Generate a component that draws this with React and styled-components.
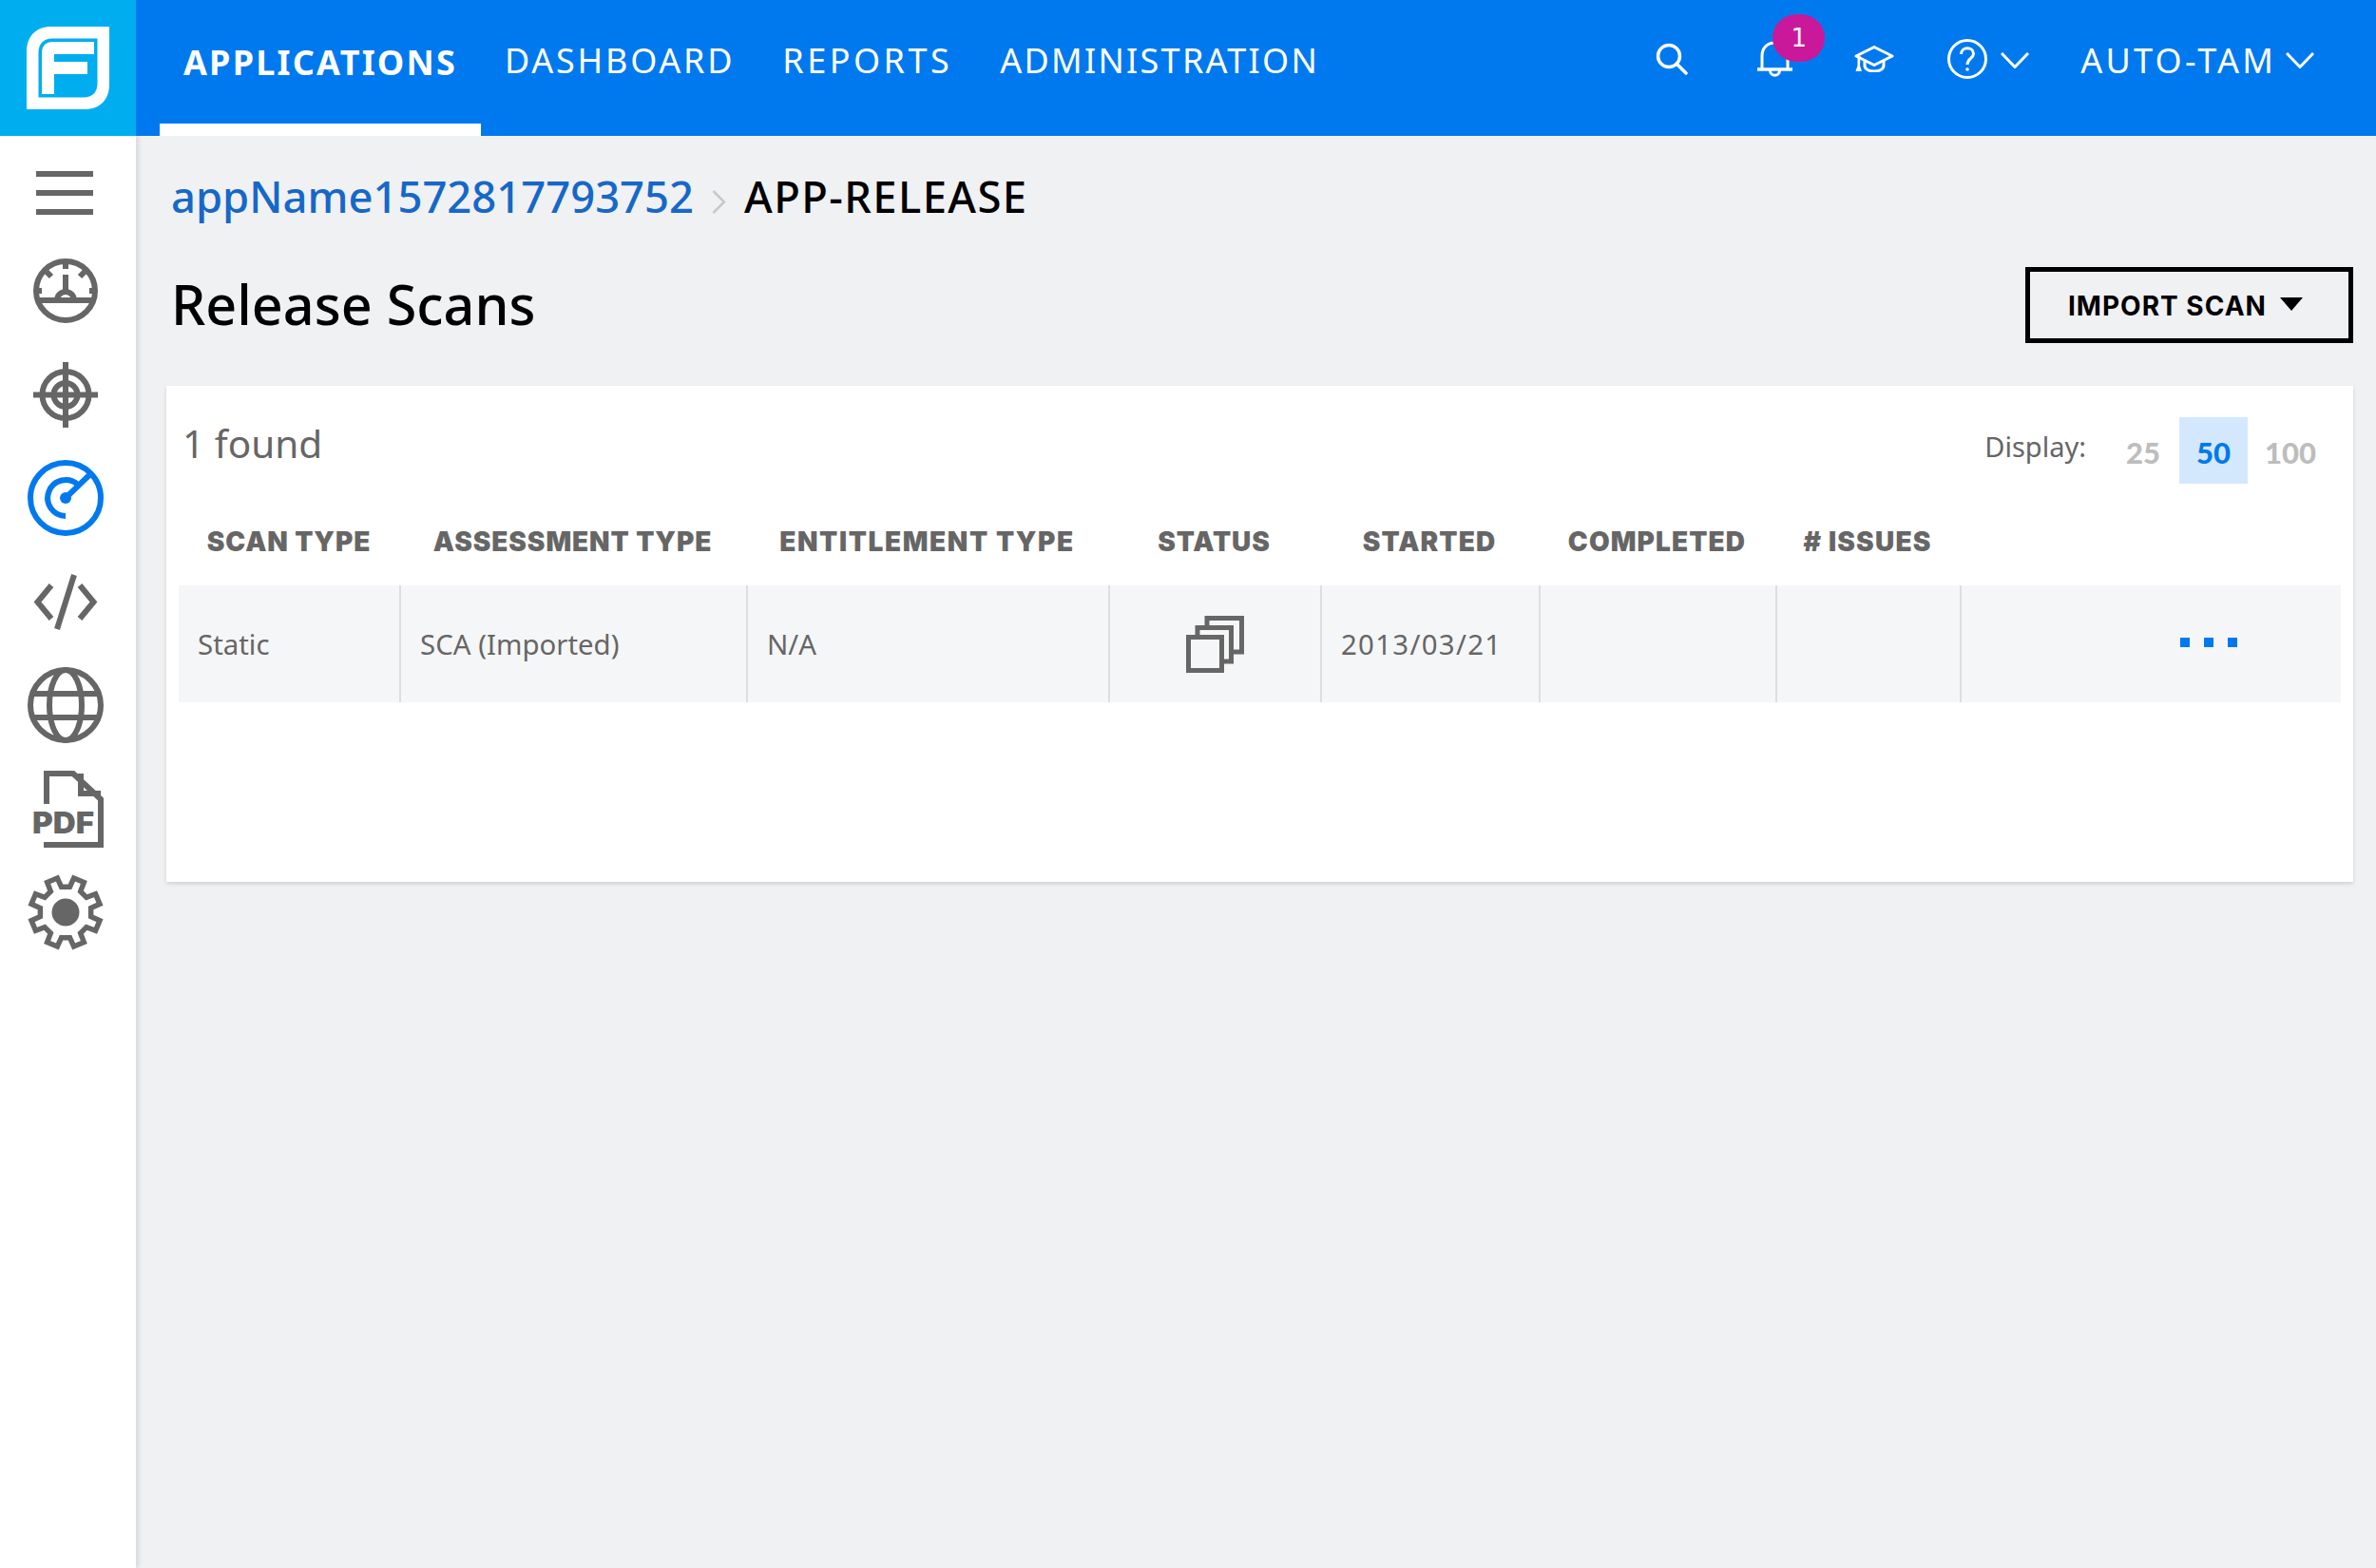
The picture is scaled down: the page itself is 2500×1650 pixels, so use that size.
import React from "react";
import styled, { createGlobalStyle } from "styled-components";

const Global = createGlobalStyle`
  html, body { margin: 0; padding: 0; background: #f0f1f3; }
  body { font-family: "Noto Sans", "Open Sans", sans-serif; }
`;

const Page = styled.div`
  width: 2500px;
  height: 1650px;
  display: flex;
  flex-direction: column;
  overflow: hidden;
  background: #f0f1f3;
`;

const TopBar = styled.header`
  height: 143px;
  flex: none;
  display: flex;
  align-items: stretch;
  background: #0079ef;
  color: #fff;
  position: relative;
  z-index: 2;
`;

const LogoBox = styled.div`
  width: 143px;
  flex: none;
  background: #00aef0;
  display: flex;
  align-items: center;
  justify-content: center;
`;

const Tabs = styled.nav`
  display: flex;
  margin-left: 25px;
`;

const Tab = styled.a`
  box-sizing: border-box;
  height: 143px;
  padding: 0 25px;
  padding-bottom: ${(p) => (p.$active ? "0" : "4px")};
  display: flex;
  align-items: center;
  font-size: 36px;
  letter-spacing: ${(p) => p.$ls}px;
  font-weight: ${(p) => (p.$active ? 700 : 400)};
  border-bottom: 13px solid ${(p) => (p.$active ? "#fff" : "transparent")};
`;

const Tools = styled.div`
  margin-left: auto;
  padding-right: 65px;
  display: flex;
  align-items: center;
  height: 124px;
`;

const Tool = styled.span`
  position: relative;
  display: flex;
  align-items: center;
  margin-left: ${(p) => p.$gap || 0}px;
  margin-top: ${(p) => p.$drop || 0}px;
`;

const Badge = styled.span`
  position: absolute;
  left: 16px;
  top: -28px;
  width: 55px;
  height: 50px;
  border-radius: 25px;
  background: #c9189a;
  color: #fff;
  font-family: "DejaVu Sans", sans-serif;
  font-size: 26px;
  display: flex;
  align-items: center;
  justify-content: center;
`;

const UserName = styled.span`
  font-size: 36px;
  letter-spacing: 3.2px;
`;

const Body = styled.div`
  flex: 1;
  display: flex;
  min-height: 0;
`;

const Sidebar = styled.aside`
  width: 143px;
  flex: none;
  box-sizing: border-box;
  padding: 12px 5px 0 0;
  background: #fff;
  box-shadow: 3px 0 5px rgba(0, 0, 0, 0.1);
  display: flex;
  flex-direction: column;
  align-items: center;
`;

const BurgerSlot = styled.div`
  height: 96.5px;
  display: flex;
  align-items: center;
  margin-left: -3px;
`;

const NavSlot = styled.div`
  height: 109px;
  display: flex;
  align-items: center;
  justify-content: center;
  margin-left: ${(p) => p.$shift || 0}px;
`;

const Main = styled.main`
  flex: 1;
  min-width: 0;
  padding: 35px 24px 0 32px;
`;

const Crumbs = styled.div`
  display: flex;
  align-items: center;
  padding-left: 5px;
  height: 56px;
  font-size: 45.4px;
  font-weight: 500;
`;

const CrumbLink = styled.a`
  color: #1668c8;
`;

const CrumbSep = styled.span`
  display: flex;
  margin: 12px 19px 0 19px;
`;

const CrumbCurrent = styled.span`
  color: #000;
  letter-spacing: 1.4px;
`;

const TitleRow = styled.div`
  display: flex;
  align-items: center;
  justify-content: space-between;
  margin-top: 47px;
  height: 80px;
`;

const Title = styled.h1`
  margin: -3px 0 0 5px;
  font-size: 57.5px;
  font-weight: 500;
  color: #000;
`;

const ImportButton = styled.button`
  box-sizing: border-box;
  width: 345px;
  height: 80px;
  background: transparent;
  border: 5px solid #000;
  padding: 2px 0 0 40px;
  display: flex;
  align-items: center;
  gap: 14px;
  font-family: Inter, sans-serif;
  font-weight: 700;
  font-size: 28px;
  letter-spacing: 1px;
  color: #000;
  white-space: nowrap;
`;

const Caret = styled.i`
  width: 0;
  height: 0;
  margin-top: -5px;
  border-left: 12px solid transparent;
  border-right: 12px solid transparent;
  border-top: 14px solid #000;
`;

const Card = styled.section`
  box-sizing: border-box;
  margin-top: 45px;
  height: 522px;
  background: #fff;
  padding: 0 13px;
  box-shadow: 0 2px 4px rgba(0, 0, 0, 0.14);
`;

const CardHead = styled.div`
  display: flex;
  justify-content: space-between;
  align-items: flex-start;
  height: 127px;
`;

const Found = styled.div`
  margin: 32px 0 0 4px;
  font-size: 40.5px;
  line-height: 58px;
  color: #666;
`;

const Display = styled.div`
  display: flex;
  align-items: stretch;
  margin: 33px 8px 0 0;
  height: 70px;
`;

const DisplayLabel = styled.span`
  font-size: 29px;
  color: #666;
  margin-right: 22px;
  line-height: 62px;
`;

const Size = styled.span`
  font-family: Lato, sans-serif;
  font-weight: 900;
  font-size: 31px;
  line-height: 75px;
  width: ${(p) => p.$w}px;
  text-align: center;
  color: ${(p) => (p.$on ? "#0079ef" : "#bdbdbd")};
  background: ${(p) => (p.$on ? "#d4e8fd" : "transparent")};
`;

const COLS = "232px 365px 381px 223px 230px 249px 194px 401px";

const HeadRow = styled.div`
  display: grid;
  grid-template-columns: ${COLS};
  height: 83px;
  padding-bottom: 9px;
  box-sizing: border-box;
  align-items: center;
`;

const HeadCell = styled.div`
  text-align: center;
  font-family: Inter, sans-serif;
  font-weight: 900;
  font-size: 28px;
  letter-spacing: ${(p) => p.$ls}px;
  color: #666;
`;

const Row = styled.div`
  display: grid;
  grid-template-columns: ${COLS};
  height: 123px;
  background: #f5f6f8;
`;

const Cell = styled.div`
  box-sizing: border-box;
  padding-left: ${(p) => p.$pad ?? 20}px;
  display: flex;
  align-items: center;
  justify-content: ${(p) => p.$justify || "flex-start"};
  font-size: 29.4px;
  letter-spacing: ${(p) => p.$ls || 0}px;
  color: #666;
  border-left: ${(p) => (p.$first ? "0" : "2px solid #dcdee1")};
`;

const Dots = styled.span`
  display: flex;
  gap: 15px;
  margin: -3px 0 0 210px;
`;

const Dot = styled.i`
  width: 10px;
  height: 10px;
  background: #0079ef;
`;

const Logo = () => (
  <svg width="87" height="87" viewBox="0 0 87 87">
    <path d="M0 87V26C0 10 10 0 26 0H87V61C87 77 77 87 61 87Z" fill="#fff" />
    <path d="M12.5 74.5V27C12.5 18 18 12.5 27 12.5H74.5V60C74.5 69 69 74.5 60 74.5Z" fill="#00aef0" />
    <path d="M16 71V28C16 20 20 16 28 16H71V29H29V37H64V50H29V71Z" fill="#fff" />
  </svg>
);

const Search = () => (
  <svg width="34" height="34" viewBox="0 0 34 34" fill="none" stroke="#fff" strokeWidth="3.5">
    <circle cx="14" cy="14" r="11.5" />
    <path d="M22 22L32 32" strokeLinecap="round" />
  </svg>
);

const Bell = () => (
  <svg width="37" height="38" viewBox="0 0 37 38" fill="none" stroke="#fff" strokeWidth="3">
    <path d="M5 30V16C5 7 11 2 18.5 2S32 7 32 16V30" />
    <path d="M0 30H37" strokeWidth="3.4" />
    <path d="M13.5 31C13.5 38 23.5 38 23.5 31" />
  </svg>
);

const Cap = () => (
  <svg width="42" height="28" viewBox="0 0 42 28" fill="none" stroke="#fff" strokeWidth="3">
    <path d="M21 1.5L40 11L21 20.5L2 11Z" strokeLinejoin="round" />
    <path d="M11 15V21C11 29 31 29 31 21V15" />
    <path d="M3.5 11H6.5L6 21L8 27H1.5L3.5 21Z" fill="#fff" stroke="none" />
  </svg>
);

const Help = () => (
  <svg width="44" height="42" viewBox="0 0 44 42" fill="none" stroke="#fff" strokeWidth="3">
    <circle cx="22" cy="21" r="19.5" />
    <path d="M15.5 16C15.5 7.5 28.5 8 28.5 15.5C28.5 20.5 22 20.5 22 27" />
    <circle cx="22" cy="32" r="1.8" fill="#fff" stroke="none" />
  </svg>
);

const Chevron = () => (
  <svg width="30" height="17" viewBox="0 0 30 17" fill="none" stroke="#fff" strokeWidth="3">
    <path d="M1 1L15 15.5L29 1" />
  </svg>
);

const Burger = () => (
  <svg width="60" height="46" viewBox="0 0 60 46" fill="#666">
    <rect y="0" width="60" height="6" />
    <rect y="20" width="60" height="6" />
    <rect y="40" width="60" height="6" />
  </svg>
);

const Gauge = () => (
  <svg width="68" height="68" viewBox="0 0 68 68" fill="none" stroke="#666" strokeWidth="6">
    <circle cx="34" cy="34" r="31" />
    <path d="M3 44H65" />
    <path d="M34 3V11M34 17V36M9 34H4M59 34H64M14 14L19 19M54 14L49 19" />
    <path d="M25 44A9 9 0 0 1 43 44" />
  </svg>
);

const Target = () => (
  <svg width="68" height="69" viewBox="0 0 68 69" fill="none" stroke="#666" strokeWidth="6">
    <circle cx="34" cy="34.5" r="24.5" />
    <circle cx="34" cy="34.5" r="12.5" />
    <path d="M34 0V69M0 34.5H68" />
  </svg>
);

const Radar = () => (
  <svg width="80" height="80" viewBox="0 0 80 80" fill="none" stroke="#0079ef" strokeWidth="6">
    <circle cx="40" cy="40" r="37" />
    <path d="M40 59A19 19 0 1 1 53 26" />
    <path d="M40 40L66 15" />
    <circle cx="40" cy="40" r="6" fill="#0079ef" stroke="none" />
  </svg>
);

const Code = () => (
  <svg width="68" height="59" viewBox="0 0 68 59" fill="none" stroke="#666" strokeWidth="6">
    <path d="M19 12L4.5 29.5L19 47" />
    <path d="M49 12L63.5 29.5L49 47" />
    <path d="M43 1L25 58" />
  </svg>
);

const Globe = () => (
  <svg width="80" height="80" viewBox="0 0 80 80" fill="none" stroke="#666" strokeWidth="6">
    <circle cx="40" cy="40" r="37" />
    <ellipse cx="40" cy="40" rx="17" ry="37" />
    <path d="M7 28H73M7 53H73" />
  </svg>
);

const PdfLabel = styled.text`
  font-family: Inter, sans-serif;
  font-weight: 900;
  font-size: 31px;
  fill: #666;
`;

const Pdf = () => (
  <svg width="74" height="81" viewBox="0 0 74 81">
    <path d="M14 35V3H42L71 30V78H11" fill="none" stroke="#666" strokeWidth="6" />
    <path d="M50 3V24H71" fill="none" stroke="#666" strokeWidth="6" />
    <PdfLabel x="-1" y="66" textLength="65" lengthAdjust="spacingAndGlyphs">PDF</PdfLabel>
  </svg>
);

const gearPoints = () => {
  const pts = [];
  const p = (deg, r) => {
    const a = (deg * Math.PI) / 180;
    return `${(40 + r * Math.cos(a)).toFixed(2)},${(40 + r * Math.sin(a)).toFixed(2)}`;
  };
  for (let k = 0; k < 8; k++) {
    const a = 22.5 + 45 * k;
    pts.push(p(a - 13, 27), p(a - 9, 37), p(a + 9, 37), p(a + 13, 27));
  }
  return pts.join(" ");
};

const Gear = () => (
  <svg width="80" height="80" viewBox="0 0 80 80" overflow="visible">
    <polygon points={gearPoints()} fill="none" stroke="#666" strokeWidth="5.5" strokeLinejoin="miter" />
    <circle cx="40" cy="40" r="14.5" fill="#666" />
  </svg>
);

const Copies = () => (
  <svg width="61" height="60" viewBox="0 0 61 60" fill="none" stroke="#666" strokeWidth="5">
    <rect x="2.5" y="22.5" width="35" height="35" />
    <path d="M12 22V12.5H47.5V48H38" />
    <path d="M22 12V2.5H58.5V38H48" />
  </svg>
);

const Sep = () => (
  <svg width="15" height="25" viewBox="0 0 15 25" fill="none" stroke="#c8c8c8" strokeWidth="2.5">
    <path d="M1.5 1L13 12.5L1.5 24" />
  </svg>
);

const headers = [
  ["SCAN TYPE", 0.9],
  ["ASSESSMENT TYPE", 0.9],
  ["ENTITLEMENT TYPE", 1.6],
  ["STATUS", 0.9],
  ["STARTED", 1.1],
  ["COMPLETED", 1.1],
  ["# ISSUES", 1.2],
  ["", 0],
];

export default function App() {
  return (
    <Page>
      <Global />
      <TopBar>
        <LogoBox><Logo /></LogoBox>
        <Tabs>
          <Tab $active $ls={2.2}>APPLICATIONS</Tab>
          <Tab $ls={2.75}>DASHBOARD</Tab>
          <Tab $ls={3.5}>REPORTS</Tab>
          <Tab $ls={2.27}>ADMINISTRATION</Tab>
        </Tabs>
        <Tools>
          <Tool><Search /></Tool>
          <Tool $gap={73}><Bell /><Badge>1</Badge></Tool>
          <Tool $gap={65}><Cap /></Tool>
          <Tool $gap={55}><Help /></Tool>
          <Tool $gap={13} $drop={3}><Chevron /></Tool>
          <Tool $gap={54} $drop={2}><UserName>AUTO-TAM</UserName></Tool>
          <Tool $gap={10} $drop={3}><Chevron /></Tool>
        </Tools>
      </TopBar>
      <Body>
        <Sidebar>
          <BurgerSlot><Burger /></BurgerSlot>
          <NavSlot><Gauge /></NavSlot>
          <NavSlot><Target /></NavSlot>
          <NavSlot><Radar /></NavSlot>
          <NavSlot><Code /></NavSlot>
          <NavSlot><Globe /></NavSlot>
          <NavSlot $shift={6}><Pdf /></NavSlot>
          <NavSlot><Gear /></NavSlot>
        </Sidebar>
        <Main>
          <Crumbs>
            <CrumbLink>appName1572817793752</CrumbLink>
            <CrumbSep><Sep /></CrumbSep>
            <CrumbCurrent>APP-RELEASE</CrumbCurrent>
          </Crumbs>
          <TitleRow>
            <Title>Release Scans</Title>
            <ImportButton>IMPORT SCAN<Caret /></ImportButton>
          </TitleRow>
          <Card>
            <CardHead>
              <Found>1 found</Found>
              <Display>
                <DisplayLabel>Display:</DisplayLabel>
                <Size $w={76}>25</Size>
                <Size $w={72} $on>50</Size>
                <Size $w={90}>100</Size>
              </Display>
            </CardHead>
            <HeadRow>
              {headers.map(([h, ls], i) => <HeadCell key={i} $ls={ls}>{h}</HeadCell>)}
            </HeadRow>
            <Row>
              <Cell $first>Static</Cell>
              <Cell>SCA (Imported)</Cell>
              <Cell>N/A</Cell>
              <Cell $pad={0} $justify="center"><Copies /></Cell>
              <Cell $ls={1.3}>2013/03/21</Cell>
              <Cell />
              <Cell />
              <Cell><Dots><Dot /><Dot /><Dot /></Dots></Cell>
            </Row>
          </Card>
        </Main>
      </Body>
    </Page>
  );
}
